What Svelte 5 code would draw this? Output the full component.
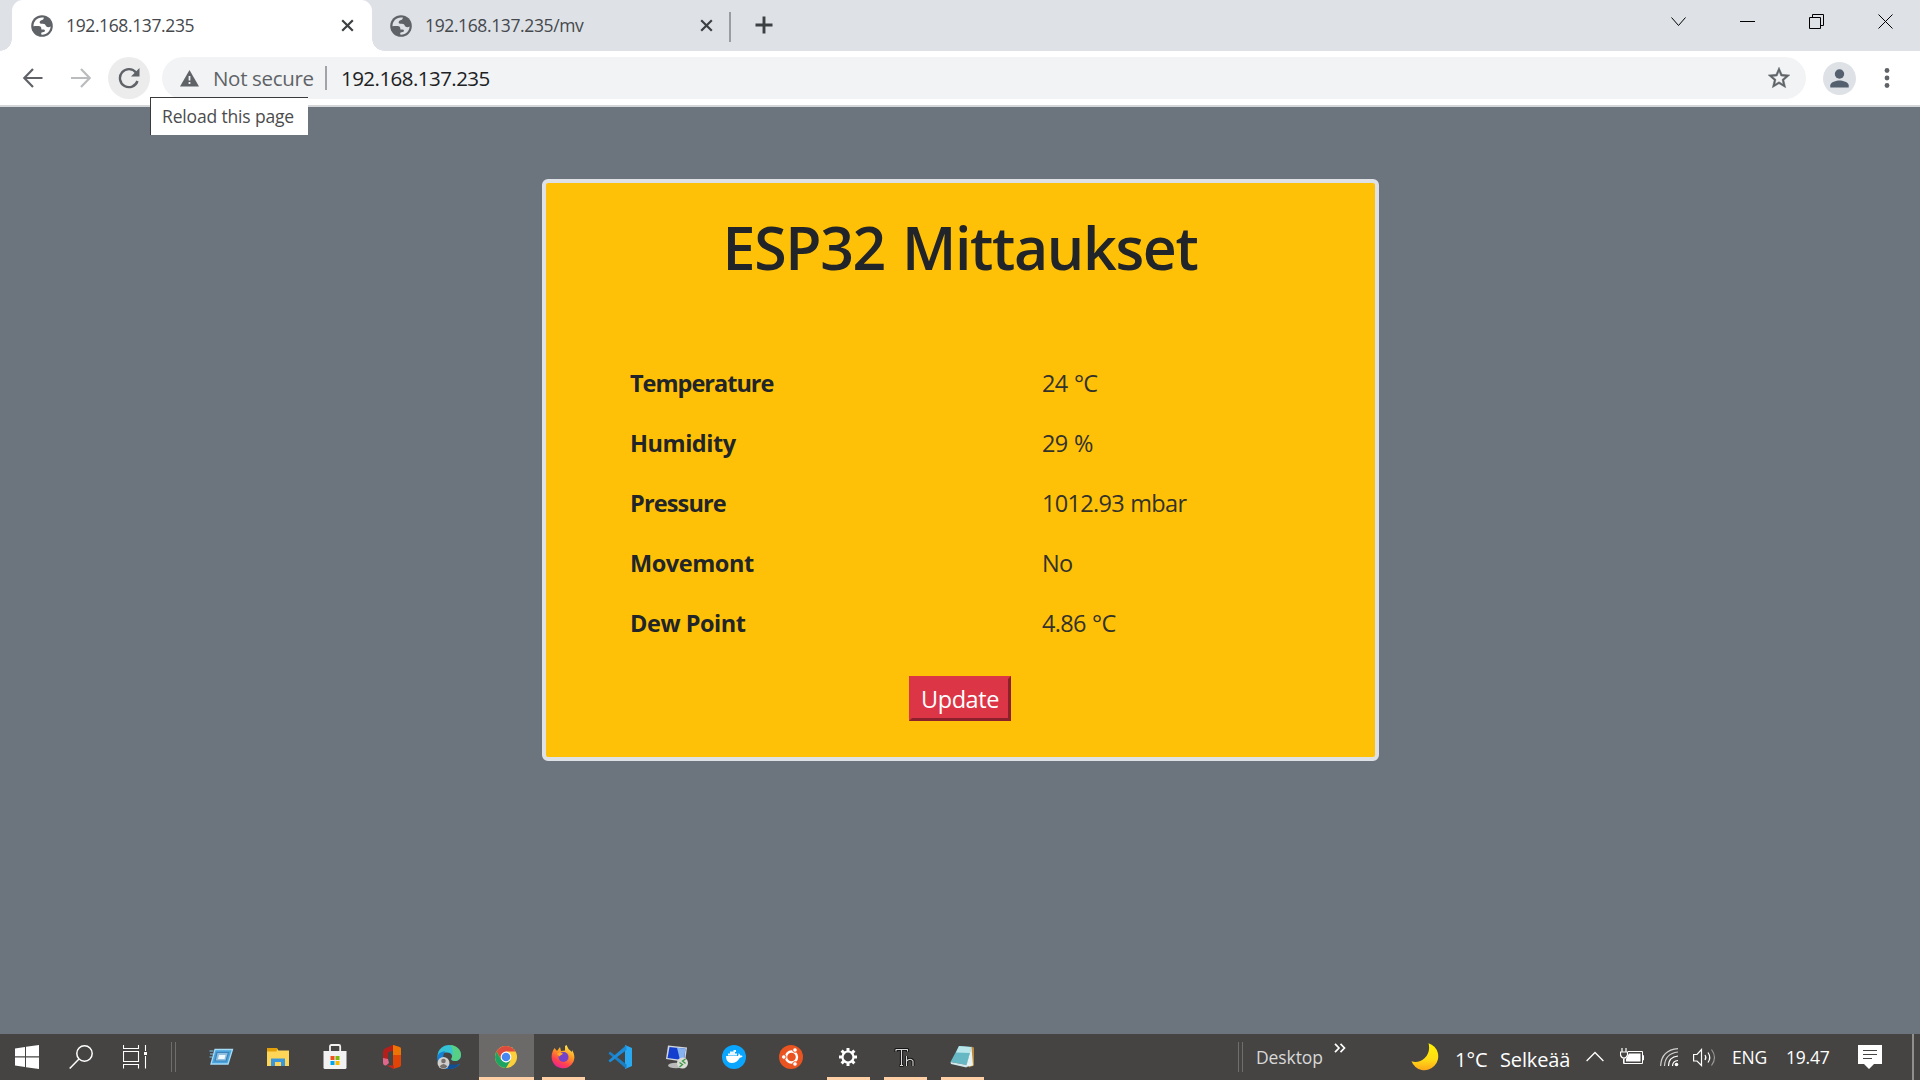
<script>
  const readings = [
    ['Temperature', '24 °C'],
    ['Humidity', '29 %'],
    ['Pressure', '1012.93 mbar'],
    ['Movemont', 'No'],
    ['Dew Point', '4.86 °C']
  ];
  const tabs = [
    { title: '192.168.137.235', active: true },
    { title: '192.168.137.235/mv', active: false }
  ];
  const apps = [
    { id: 'run' }, { id: 'files' }, { id: 'store' }, { id: 'office' }, { id: 'edge' },
    { id: 'chrome', active: true }, { id: 'firefox', open: true }, { id: 'code' },
    { id: 'remote' }, { id: 'docker' }, { id: 'ubuntu' },
    { id: 'settings', open: true }, { id: 'thonny', open: true }, { id: 'notepad', open: true }
  ];
  const teeth = [0, 45, 90, 135, 180, 225, 270, 315];
</script>

<div class="screen">
  <header class="tabstrip">
    {#each tabs as tab}
      <div class="tab" class:active={tab.active}>
        <svg class="globe" width="22" height="22" viewBox="0 0 22 22">
          <circle cx="11" cy="11" r="10.8" fill="#5f6368" />
          <path fill={tab.active ? '#fff' : '#dee1e6'} d="M12.800 2.600C7 1.500 2.300 5.800 2.500 11.200c2.300-.3 4.800-.4 6.300.1 1.500.6 1.600 1.800 1.600 3.200h2.300c1.300 0 1.600 1.500.8 2.300-.8.7-3.300.3-3.300 1.500v1.300C15.500 20.200 19.500 16 19.600 11.500c-1.500 1-3.200.9-4.200-.1-.9-1-.9-2.200-2.400-2.400-1.500-.2-3 .1-4-.7-.8-.9-.2-2.400.9-2.800.9-.3 2.900-.4 2.900-2.900z" />
        </svg>
        <span class="tab-title">{tab.title}</span>
        <svg class="tab-close" width="13" height="13" viewBox="0 0 13 13"><path d="M1.200 1.200l10.600 10.600M11.800 1.200L1.200 11.800" stroke="#3c4043" stroke-width="2.200" /></svg>
      </div>
    {/each}
    <i class="tab-sep"></i>
    <svg class="plus" width="18" height="18" viewBox="0 0 18 18"><path d="M9 .5v17M.5 9h17" stroke="#3c4043" stroke-width="2.900" /></svg>
    <div class="window-controls">
      <svg width="16" height="16" viewBox="0 0 16 16"><path d="M.5 3.500L7.500 11.500l7-8" /></svg>
      <svg width="16" height="16" viewBox="0 0 16 16"><path d="M0 7.500h15" /></svg>
      <svg width="16" height="16" viewBox="0 0 16 16"><path d="M.5 3.500h11v11H.5zM3.500 3.500v-3h11v11h-3" /></svg>
      <svg width="16" height="16" viewBox="0 0 16 16"><path d="M.5.5l14 14M14.500.5l-14 14" /></svg>
    </div>
  </header>

  <div class="toolbar">
    <svg class="arrow" width="21" height="20" viewBox="0 0 21 20"><path d="M20.500 10H2.500M11 1L2.300 10l8.700 9" stroke="#5f6368" /></svg>
    <svg class="arrow fwd" width="21" height="20" viewBox="0 0 21 20"><path d="M1 10h18.500M11 1l8.700 9-8.700 9" stroke="#babcbe" /></svg>
    <div class="reload">
      <svg width="22" height="22" viewBox="0 0 22 22"><path d="M18 5.500A9 9 0 1 0 19.500 14" fill="none" stroke="#5f6368" stroke-width="2.400" /><path d="M21.500 1v8.500H13z" fill="#5f6368" /></svg>
      <div class="tooltip"><span>Reload this page</span></div>
    </div>
    <div class="omnibox">
      <svg class="warn" width="19" height="17" viewBox="0 0 19 17"><path d="M9.500 0L19 16.500H0z" fill="#5f6368" /><path d="M9.500 6v4.500M9.500 12v2" stroke="#f1f3f4" stroke-width="1.800" /></svg>
      <span class="not-secure">Not secure</span>
      <i class="omni-sep"></i>
      <span class="url">192.168.137.235</span>
      <svg class="star" width="26" height="26" viewBox="0 0 24 24"><path d="M22 9.240l-7.190-.62L12 2 9.190 8.630 2 9.240l5.460 4.730L5.820 21 12 17.270 18.180 21l-1.630-7.030L22 9.240zM12 15.400l-3.760 2.270 1-4.280-3.320-2.880 4.380-.38L12 6.100l1.710 4.040 4.380.38-3.320 2.880 1 4.280L12 15.400z" fill="#5f6368" stroke="#5f6368" stroke-width=".4" /></svg>
    </div>
    <svg class="avatar" width="33" height="33" viewBox="0 0 33 33"><circle cx="16.500" cy="16.500" r="16.500" fill="#dee1e6" /><circle cx="16.500" cy="12" r="4.700" fill="#55606f" /><path d="M7.300 25.500v-2.200c0-3.200 6.200-4.800 9.200-4.800s9.200 1.600 9.200 4.800v2.200z" fill="#55606f" /></svg>
    <svg class="dots" width="6" height="22" viewBox="0 0 6 22"><g fill="#5f6368"><circle cx="3" cy="3.500" r="2.400" /><circle cx="3" cy="11" r="2.400" /><circle cx="3" cy="18.500" r="2.400" /></g></svg>
  </div>

  <main>
    <section class="card">
      <h1>ESP32 Mittaukset</h1>
      <dl>
        {#each readings as [label, value]}
          <div class="row"><dt>{label}</dt><dd>{value}</dd></div>
        {/each}
      </dl>
      <button><span>Update</span></button>
    </section>
  </main>

  <footer class="taskbar">
    <svg class="start" width="24" height="24" viewBox="0 0 24 24"><path fill="#fff" d="M0 3.400L10 2v9.300H0zM11 1.800L24 0v11.300H11zM0 12.500h10V22L0 20.600zM11 12.500h13V24l-13-1.800z" /></svg>
    <svg class="search" width="24" height="24" viewBox="0 0 24 24"><g fill="none" stroke="#fff" stroke-width="1.500"><circle cx="15.500" cy="8.500" r="7.700" /><path d="M10 14L.7 23.500" /></g></svg>
    <svg class="taskview" width="24" height="24" viewBox="0 0 24 24"><path d="M.5 0v3.500h15V0M.5 6.500h15v10H.5zM.5 23.500v-4h15v4M22.500 0v6M22.500 11v12.500" fill="none" stroke="#fff" stroke-width="1.100" /><path d="M21 7h3v3h-3z" fill="#fff" /></svg>
    <i class="grip"></i>
    <nav class="apps">
      {#each apps as app}
        <div class="app" class:focused={app.active} class:open={app.open}>
          <svg width="26" height="26" viewBox="0 0 26 26">
            {#if app.id === 'run'}
              <path d="M7 5.500h17.500L20 20H3z" fill="#4aa3dc" stroke="#a5dcf7" stroke-width="1.300" />
              <path d="M9 8.500h11.500L18 17H7z" fill="#8fbfe0" stroke="#3d83b8" stroke-width="1.200" />
              <path d="M11 11h6.500l-1 4H10z" fill="#eef8ff" />
              <path d="M1.500 7h4M2 10h3M1.500 13h3" stroke="#7fc4ea" />
            {:else if app.id === 'files'}
              <path d="M2 4h9.500l2 2.500H24V22H2z" fill="#ffd557" />
              <path d="M2 4h10.500l-1 3.500H2z" fill="#e3a008" />
              <path d="M6 22v-7.500h14V22h-4v-4h-6v4z" fill="#3b97dc" />
            {:else if app.id === 'store'}
              <path d="M8 8V2.500C8 1.500 8.500 1 9.500 1h7.300c1 0 1.400.5 1.400 1.500V8" fill="none" stroke="#f2f2f2" stroke-width="1.800" />
              <path d="M1.500 7H24.500v16.500q0 1.500-1.500 1.500H3q-1.500 0-1.500-1.500z" fill="#f2f2f2" />
              <path d="M8.500 12h4v4h-4z" fill="#f1511b" /><path d="M13.500 12h4v4h-4z" fill="#80bb0a" />
              <path d="M8.500 17h4v4h-4z" fill="#00a3ee" /><path d="M13.500 17h4v4h-4z" fill="#fbb900" />
            {:else if app.id === 'office'}
              <path d="M14 1L6 4.500Q4 5.500 4 8v10q0 2.500 2 3l3-2.500V8.500L15.500 6z" fill="#b3201b" />
              <path d="M4 14v5q.5 3 3 2.500l3-2.500-1-4z" fill="#e0678a" />
              <path d="M14 1l6.500 2q1.500.5 1.500 2v16q0 1.500-1.500 2L14 25z" fill="#e04406" />
              <path d="M14 1l6.500 2q1.500.5 1.500 2v6h-8z" fill="#ec7306" />
              <path d="M7.500 21.500H15V25z" fill="#c92a1c" />
            {:else if app.id === 'edge'}
              <path d="M1.500 12C2 5 7 1 13 1c7 0 12 4.500 12 10 0 4-3 6-6 6-2.500 0-4.500-1-3.500-2.500C17 12 15.500 8.500 11 8.500 6 8.500 2 11 1.500 14z" fill="#35c1d6" />
              <path d="M14 1c7 .2 11 5 11 9.500 0 4-3 6.500-6 6.500-2.500 0-4-1-3.500-2.500 2-4 2-9.500-1.500-13.500z" fill="#63d46b" opacity=".75" />
              <path d="M1.200 14C1.500 9 6 7 9.500 7.500c-3 2-3.500 9 1.500 13 4 2.500 9 1.500 13-1C21.500 23.500 17 25 13 25 6 25 1 20 1.200 14z" fill="#1680d4" />
              <path d="M10 13c-1.500 5 3 9.500 13.500 7C20 24 17 25 13 25c-4-1-6-8-3-12z" fill="#114f94" />
              <circle cx="7.500" cy="19" r="6" fill="#d2cfcc" /><circle cx="7.500" cy="17" r="2.300" fill="#77716d" /><path d="M3.500 22.500q4-5 8 0-4 4-8 0z" fill="#77716d" />
            {:else if app.id === 'chrome'}
              <circle cx="13" cy="13" r="11" fill="#fdd03b" />
              <path d="M3.500 7.500A11 11 0 0 1 22.500 7.500H13L8.200 15.700z" fill="#dd4b3e" />
              <path d="M3.500 7.500L8.200 15.700 13 18.500l4.500-2L13 24A11 11 0 0 1 3.500 7.500z" fill="#1da362" />
              <circle cx="13" cy="13" r="5.400" fill="#fff" /><circle cx="13" cy="13" r="4.300" fill="#4688f1" />
            {:else if app.id === 'firefox'}
              <defs><linearGradient id="fox" x1=".8" y1="0" x2=".3" y2="1"><stop offset="0" stop-color="#fff14a" /><stop offset=".4" stop-color="#ff9a22" /><stop offset=".75" stop-color="#ff4050" /><stop offset="1" stop-color="#e8219c" /></linearGradient></defs>
              <path d="M4.500 4L7 7l3-4 1 4 4-.5V2l1.500-1 2 4 3.500 3V6c3 5 3 9 1 12.500A11.500 11.500 0 0 1 2 16c-1-4 0-8.500 2.500-12z" fill="url(#fox)" />
              <circle cx="13.500" cy="13" r="5" fill="#7542c8" />
              <path d="M7 10c2-2 4-1 6-.5-1 1.500-2.500 1.500-3.500 3z" fill="#ffad26" />
            {:else if app.id === 'code'}
              <path d="M18 1l7 3v18l-7 3z" fill="#28a9f2" />
              <path d="M3 7.500L19.500 20.500V25L1.500 9.500z" fill="#1b7fc4" />
              <path d="M3 18.500L19.500 6V1L1.500 16.500z" fill="#1d8cd8" />
            {:else if app.id === 'remote'}
              <ellipse cx="12" cy="21.500" rx="8" ry="2.800" fill="#b9b9b9" />
              <path d="M4 1.500l19 2-2 14.500-19-3z" fill="#d3d7dc" />
              <path d="M5.500 3l16 1.700-1.600 11.500L3.500 14z" fill="#143fce" /><path d="M13 3.800l8.500.9-1.600 11.500-4-.6z" fill="#86b2ef" />
              <circle cx="18.500" cy="19" r="5.500" fill="#d9ddd6" /><path d="M15.500 18.500l3 2-3 2.500M21.500 15l-3 2 3 2.500" fill="none" stroke="#3d9640" stroke-width="1.300" />
            {:else if app.id === 'docker'}
              <circle cx="13" cy="13" r="12" fill="#0aa5ff" />
              <path d="M5 12h12q1-1.500.5-3 1.500 1 1.800 2.500 1.500-.3 2.500.4-1 1.800-3 1.800Q16 19 10.500 19 5 18.500 5 12z" fill="#fff" />
              <path d="M7 9.500h9v2H7zM9 7.500h5v2H9zM12.500 6H15v2h-2.500z" fill="#fff" opacity=".9" />
            {:else if app.id === 'ubuntu'}
              <circle cx="13" cy="13" r="12" fill="#e95420" />
              <circle cx="13.500" cy="13" r="5.500" fill="none" stroke="#fff" stroke-width="2.400" />
              <g fill="#fff" stroke="#e95420"><circle cx="5.800" cy="13" r="2.300" /><circle cx="17" cy="6" r="2.300" /><circle cx="17" cy="20" r="2.300" /></g>
            {:else if app.id === 'settings'}
              {#each teeth as a}<path d="M11.500 4h3v4h-3z" fill="#fff" transform="rotate({a} 13 13)" />{/each}
              <circle cx="13" cy="13" r="5.500" fill="none" stroke="#fff" stroke-width="2.200" />
            {:else if app.id === 'thonny'}
              <g fill="none" stroke-linejoin="round">
                <path d="M4 8V5.500h11.500V8M9.500 5.500v15M7.500 21.500h4M14.500 12v10M14.500 17q4-3.500 6.500 0v5" stroke="#151515" stroke-width="3.200" />
                <path d="M4 7.500V5.500h11.500v2M9.500 5.500v15.500M8 21.500h3M14.500 12v10M14.500 17q4-3.500 6.500 0v5" stroke="#d8d8d8" stroke-width="1.100" />
              </g>
            {:else}
              <path d="M22 2.500l3 1v18l-5 2z" fill="#b98a3c" />
              <path d="M10 2l12.500 1L18 21 1.500 18z" fill="#66b9c4" /><path d="M10 2l12.500 1-1.500 6L7 8.500z" fill="#b8e6ea" />
              <path d="M22.500 3L24 21.500 17 23z" fill="#e7f2f3" /><path d="M1.500 18L18 21l-.5 2.500L2 20z" fill="#cfe9ec" />
            {/if}
          </svg>
        </div>
      {/each}
    </nav>
    <i class="grip right"></i>
    <span class="t desktop">Desktop</span>
    <svg class="more" width="12" height="10" viewBox="0 0 12 10"><path d="M1 .8L5 5 1 9.200M6.500.8L10.500 5l-4 4.200" fill="none" stroke="#fff" stroke-width="1.700" /></svg>
    <svg class="moon" width="29" height="28" viewBox="0 0 29 28"><defs><linearGradient id="moon" x1="0" y1="0" x2="0" y2="1"><stop offset="0" stop-color="#fff200" /><stop offset=".6" stop-color="#ffdc16" /><stop offset="1" stop-color="#ffa818" /></linearGradient></defs><path d="M17.500.2A13.800 13.800 0 1 1 .5 18.200C9 21.500 21 13 17.500.2z" fill="url(#moon)" /></svg>
    <span class="t temp">1°C</span>
    <span class="t sky">Selkeää</span>
    <svg class="caret" width="18" height="11" viewBox="0 0 18 11"><path d="M.6 10L9 1.500l8.400 8.500" fill="none" stroke="#fff" stroke-width="1.300" /></svg>
    <svg class="battery" width="24" height="18" viewBox="0 0 24 18"><path d="M8 3.500h14.500v12H3.500V11M22.500 7.500v4.500h1V7.500z" fill="none" stroke="#fff" /><path d="M9 5.500h11.500v8H6v-2.500z" fill="#fff" /><path d="M2 0v4M6 0v4M.5 4h7v3q-1 3-3.500 3T.5 7zM4 10v5" fill="none" stroke="#fff" stroke-width="1.200" /></svg>
    <svg class="wifi" width="19" height="19" viewBox="0 0 19 19"><g fill="none" stroke="#fff" stroke-width="1.200"><path d="M12.500 18Q12.500 13 18 12.500M8.500 18Q8.500 9 18 8" /><path d="M4.500 18Q5 5.500 18 4M.6 18Q1.500 2 18 .7" opacity=".75" /></g><circle cx="16.500" cy="16.500" r="1.800" fill="#fff" /></svg>
    <svg class="volume" width="23" height="19" viewBox="0 0 23 19"><g fill="none" stroke="#fff" stroke-width="1.200"><path d="M.6 6.500H4L8.500 1.500v16L4 13H.6z" /><path d="M12 7q1.700 2.500 0 5M15 4.500q3.500 5 0 10" /><path d="M18.500 1.500q6 8 0 16" opacity=".45" /></g></svg>
    <span class="t lang">ENG</span>
    <span class="t clock">19.47</span>
    <svg class="note" width="24" height="24" viewBox="0 0 24 24"><path d="M0 0h24v19H16l-5 5-5-5H0z" fill="#fff" /><path d="M5 5.500h14M5 9.500h14M5 13.500h9" stroke="#454443" stroke-width="1.100" /></svg>
    <i class="peek"></i>
  </footer>
</div>

<style>
  :global(body) { margin: 0; overflow: hidden; }
  .screen { width: 1920px; height: 1080px; display: flex; flex-direction: column; background: #6c757d; font-family: "Open Sans", "Noto Sans", sans-serif; }
  .screen :global(*) { box-sizing: border-box; }
  svg { display: block; flex: none; }
  span, i { flex: none; white-space: nowrap; }

  .tabstrip { height: 51px; flex: none; background: #dee1e6; display: flex; padding-left: 12px; }
  .tab { width: 359px; height: 51px; display: flex; padding: 0 18px 0 19px; position: relative; }
  .tab.active { width: 360px; background: #fff; border-radius: 11px 11px 0 0; }
  .tab.active::before, .tab.active::after { content: ""; position: absolute; bottom: 0; width: 12px; height: 12px; }
  .tab.active::before { left: -12px; background: radial-gradient(circle at 0 0, #dee1e6 11.500px, #fff 12px); }
  .tab.active::after { right: -12px; background: radial-gradient(circle at 100% 0, #dee1e6 11.500px, #fff 12px); }
  .globe { margin-top: 15px; }
  .tab:not(.active) .globe { margin-left: -1px; }
  .tab-title { width: 275px; margin-left: 13px; font-size: 17.500px; line-height: 51px; letter-spacing: -.38px; color: #45494d; }
  .tab-close { margin: 19px 0 0 0; }
  .tab-sep { width: 2px; height: 30px; margin: 12px 0 0 -2px; background: #999ca1; }
  .plus { margin: 16px 0 0 23.500px; }
  .window-controls { margin: 14px 26px 0 auto; display: flex; gap: 53px; }
  .window-controls path { fill: none; stroke: #000; stroke-width: 1; }

  .toolbar { height: 56px; flex: none; background: #fff; border-bottom: 2px solid #d5d6d8; display: flex; padding: 6px 0 0 22px; }
  .arrow { margin-top: 11px; }
  .arrow path { fill: none; stroke-width: 2.200; }
  .fwd { margin-left: 27px; }
  .reload { position: relative; width: 42px; height: 42px; margin-left: 17px; border-radius: 50%; background: #ececec; padding: 10px; }
  .tooltip { position: absolute; z-index: 2; left: 42px; top: 40px; width: 158px; height: 38px; background: #fff; border: solid #3a3a3a; border-width: 1px 0 0 1px; padding-left: 11px; font-size: 17.500px; line-height: 37px; letter-spacing: -.16px; color: #4c4c4c; }
  .omnibox { width: 1644px; height: 42px; margin-left: 12px; border-radius: 21px; background: #f1f3f4; display: flex; padding-left: 18px; line-height: 42px; font-size: 20.500px; }
  .warn { margin-top: 13px; }
  .not-secure { width: 111px; margin-left: 14px; color: #5f6368; letter-spacing: -.32px; }
  .omni-sep { width: 2px; height: 24px; margin: 9px 14px 0 1px; background: #a0a3a7; }
  .url { color: #202124; letter-spacing: -.54px; }
  .star { margin: 8px 14px 0 auto; }
  .avatar { margin: 5px 0 0 17px; }
  .dots { margin: 10px 0 0 28px; }

  main { flex: 1; display: flex; justify-content: center; align-items: flex-start; padding-top: 72px; }
  .card { width: 837px; height: 582px; background: #ffc107; border: 4px solid #dee2e6; border-radius: 6px; display: flex; flex-direction: column; align-items: center; color: #212529; }
  h1 { margin: 28px 0 0; font-size: 59px; font-weight: 600; line-height: 72px; letter-spacing: -1.350px; word-spacing: 3px; white-space: nowrap; }
  dl { width: 100%; margin: 70px 0 0; padding-left: 84.500px; }
  .row { display: grid; grid-template-columns: 412px 1fr; height: 60px; line-height: 60px; font-size: 23.500px; white-space: nowrap; }
  dt { font-weight: 700; letter-spacing: -.45px; }
  .row:nth-child(1) dt { letter-spacing: -1px; }
  .row:nth-child(3) dt { letter-spacing: -.85px; }
  dd { margin: 0; font-weight: 400; letter-spacing: -.7px; word-spacing: 1px; color: #33322a; }
  button { width: 102px; height: 45px; margin: 23px 0 0; padding: 0; border: 3px solid #dc3545; border-color: #dc3545 #8b212c #8b212c #dc3545; background: #dc3545; color: #fff; font: 400 23.500px/38px "Open Sans", sans-serif; letter-spacing: -.45px; }

  .taskbar { height: 46px; flex: none; background: #454443; display: flex; color: #fff; padding-left: 15px; }
  .start, .search, .taskview { margin-top: 11px; }
  .search, .taskview { margin-left: 30px; }
  .grip { width: 5px; height: 30px; margin: 8px 0 0 24px; border: solid #6f6e6d; border-width: 0 1px; }
  .apps { display: flex; gap: 2px; margin-left: 18px; }
  .app { width: 55px; height: 46px; padding: 10px 0 0 14px; position: relative; }
  .focused { background: #6b6a69; border-bottom: 3px solid #ffcfa5; }
  .open::after { content: ""; position: absolute; left: 6px; right: 6px; bottom: 0; height: 3px; background: #ffcfa5; }
  .right { margin-left: 248px; }
  .t { line-height: 46px; font-size: 17.500px; }
  .desktop { width: 67px; margin-left: 13px; color: #d8d8d8; letter-spacing: -.1px; }
  .more { margin: 9px 0 0 11px; }
  .moon { margin: 9px 0 0 65px; }
  .temp { width: 30px; margin: 3px 0 0 15px; font-size: 20px; }
  .sky { width: 71px; margin: 3px 0 0 15px; font-size: 20px; letter-spacing: -.15px; }
  .caret { margin: 17px 0 0 15px; }
  .battery { margin: 14px 0 0 16px; }
  .wifi { margin: 14px 0 0 16px; }
  .volume { margin: 14px 0 0 14px; }
  .lang { width: 34px; margin-left: 16px; letter-spacing: -.2px; }
  .clock { width: 44px; margin-left: 20px; letter-spacing: -.2px; }
  .note { margin: 11px 0 0 28px; }
  .peek { width: 2px; height: 46px; margin-left: 30px; background: #8f8f8e; }
</style>
